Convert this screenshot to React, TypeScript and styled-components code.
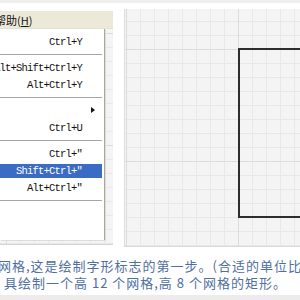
import React from 'react';
import styled, { createGlobalStyle } from 'styled-components';

const GlobalStyle = createGlobalStyle`
  html, body {
    margin: 0;
    padding: 0;
    background: #ffffff;
    overflow: hidden;
  }
`;

const Page = styled.div`
  width: 300px;
  height: 300px;
  box-sizing: border-box;
  border-top: 3px solid #efefef;
  border-bottom: 5px solid #ececec;
  display: flex;
  flex-direction: column;
  overflow: hidden;
`;

const Workspace = styled.div`
  display: flex;
  align-items: flex-start;
  gap: 11px;
`;

/* grid paper used by both canvases */
const gridPaper = (ox: number, oy: number) => `
  background-color: #f4f4f4;
  background-image:
    linear-gradient(#dcdcdc 1px, transparent 1px),
    linear-gradient(90deg, #dcdcdc 1px, transparent 1px),
    linear-gradient(#e8e8e8 1px, transparent 1px),
    linear-gradient(90deg, #e8e8e8 1px, transparent 1px);
  background-size: 112px 112px, 112px 112px, 14px 14px, 14px 14px;
  background-position: ${ox}px ${oy}px, ${ox}px ${oy}px, ${ox % 14}px ${oy % 14}px, ${ox % 14}px ${oy % 14}px;
`;

const LeftPanel = styled.div`
  width: 113px;
  height: 234px;
  margin-top: 8px;
  display: flex;
  flex-direction: column;
  border-bottom: 1px solid #d4d4d4;
  box-sizing: border-box;
`;

const MenuBar = styled.div`
  height: 17px;
  background: #ece9d8;
  border-bottom: 1px solid #e4e1d0;
  display: flex;
  align-items: center;
  font-family: "Noto Sans CJK SC", "Liberation Sans", sans-serif;
  font-size: 11px;
  color: #111;
  white-space: nowrap;
  overflow: hidden;
`;

const MenuTitle = styled.span`
  margin-left: -5px;

  u {
    text-decoration: underline;
  }
`;

const CanvasStrip = styled.div`
  flex: 1;
  display: flex;
  align-items: flex-start;
  ${gridPaper(6, 4)}
`;

const Dropdown = styled.div`
  width: 105px;
  height: 211px;
  background: #ffffff;
  border-right: 1px solid #aca899;
  box-shadow: 1px 1px 0 #dcdcdc;
  box-sizing: border-box;
  padding-top: 4px;
  display: flex;
  flex-direction: column;
  overflow: hidden;
`;

const Item = styled.div<{ $active?: boolean }>`
  height: 17px;
  width: 102px;
  display: flex;
  align-items: center;
  justify-content: flex-end;
  box-sizing: border-box;
  padding-right: 20px;
  font-family: "Liberation Mono", "DejaVu Sans Mono", monospace;
  font-size: 10.5px;
  letter-spacing: -0.8px;
  white-space: nowrap;
  position: relative;
  color: ${p => (p.$active ? '#ffffff' : '#111111')};
  background: ${p => (p.$active ? '#3a6bc5' : 'transparent')};
  box-shadow: ${p => (p.$active ? 'inset 0 2px 0 #fff, inset 0 -1px 0 #fff' : 'none')};
`;

const Separator = styled.div`
  width: 102px;
  height: 1px;
  margin: 4px 0;
  background: #a7a7a7;
`;

const SubArrow = styled.span`
  position: absolute;
  right: 7px;
  top: 5px;
  width: 0;
  height: 0;
  border-top: 3.5px solid transparent;
  border-bottom: 3.5px solid transparent;
  border-left: 4px solid #111;
`;

const RightPanel = styled.div`
  flex: 1;
  height: 238px;
  margin-top: 6px;
  position: relative;
  overflow: hidden;
  border-left: 1px solid #dedede;
  border-bottom: 1px solid #d8d8d8;
  box-sizing: border-box;
  ${gridPaper(1, 40)}
`;

const GlyphRect = styled.div`
  position: absolute;
  left: 113px;
  top: 39px;
  width: 140px;
  height: 170px;
  border: 2px solid #2e2e2e;
  box-sizing: border-box;
`;

const Caption = styled.div`
  margin-top: 10px;
  font-family: "Noto Sans CJK SC", "Noto Sans", sans-serif;
  font-size: 13px;
  line-height: 17px;
  letter-spacing: 1px;
  color: #4f6f9e;
  white-space: nowrap;
`;

const CaptionLine = styled.div<{ $indent: number }>`
  margin-left: ${p => p.$indent}px;
`;

type Entry = { kind: 'item'; text: string; active?: boolean; arrow?: boolean } | { kind: 'sep' };

const entries: Entry[] = [
  { kind: 'item', text: 'Ctrl+Y' },
  { kind: 'sep' },
  { kind: 'item', text: 'Alt+Shift+Ctrl+Y' },
  { kind: 'item', text: 'Alt+Ctrl+Y' },
  { kind: 'sep' },
  { kind: 'item', text: '', arrow: true },
  { kind: 'item', text: 'Ctrl+U' },
  { kind: 'sep' },
  { kind: 'item', text: 'Ctrl+"' },
  { kind: 'item', text: 'Shift+Ctrl+"', active: true },
  { kind: 'item', text: 'Alt+Ctrl+"' },
  { kind: 'sep' },
];

export default function App() {
  return (
    <>
      <GlobalStyle />
      <Page>
        <Workspace>
          <LeftPanel>
            <MenuBar>
              <MenuTitle>
                帮助(<u>H</u>)
              </MenuTitle>
            </MenuBar>
            <CanvasStrip>
              <Dropdown>
                {entries.map((e, i) =>
                  e.kind === 'sep' ? (
                    <Separator key={i} />
                  ) : (
                    <Item key={i} $active={e.active}>
                      {e.text}
                      {e.arrow && <SubArrow />}
                    </Item>
                  )
                )}
              </Dropdown>
            </CanvasStrip>
          </LeftPanel>
          <RightPanel>
            <GlyphRect />
          </RightPanel>
        </Workspace>
        <Caption>
          <CaptionLine $indent={-2}>网格,这是绘制字形标志的第一步。(合适的单位比</CaptionLine>
          <CaptionLine $indent={4}>具绘制一个高 12 个网格,高 8 个网格的矩形。</CaptionLine>
        </Caption>
      </Page>
    </>
  );
}
